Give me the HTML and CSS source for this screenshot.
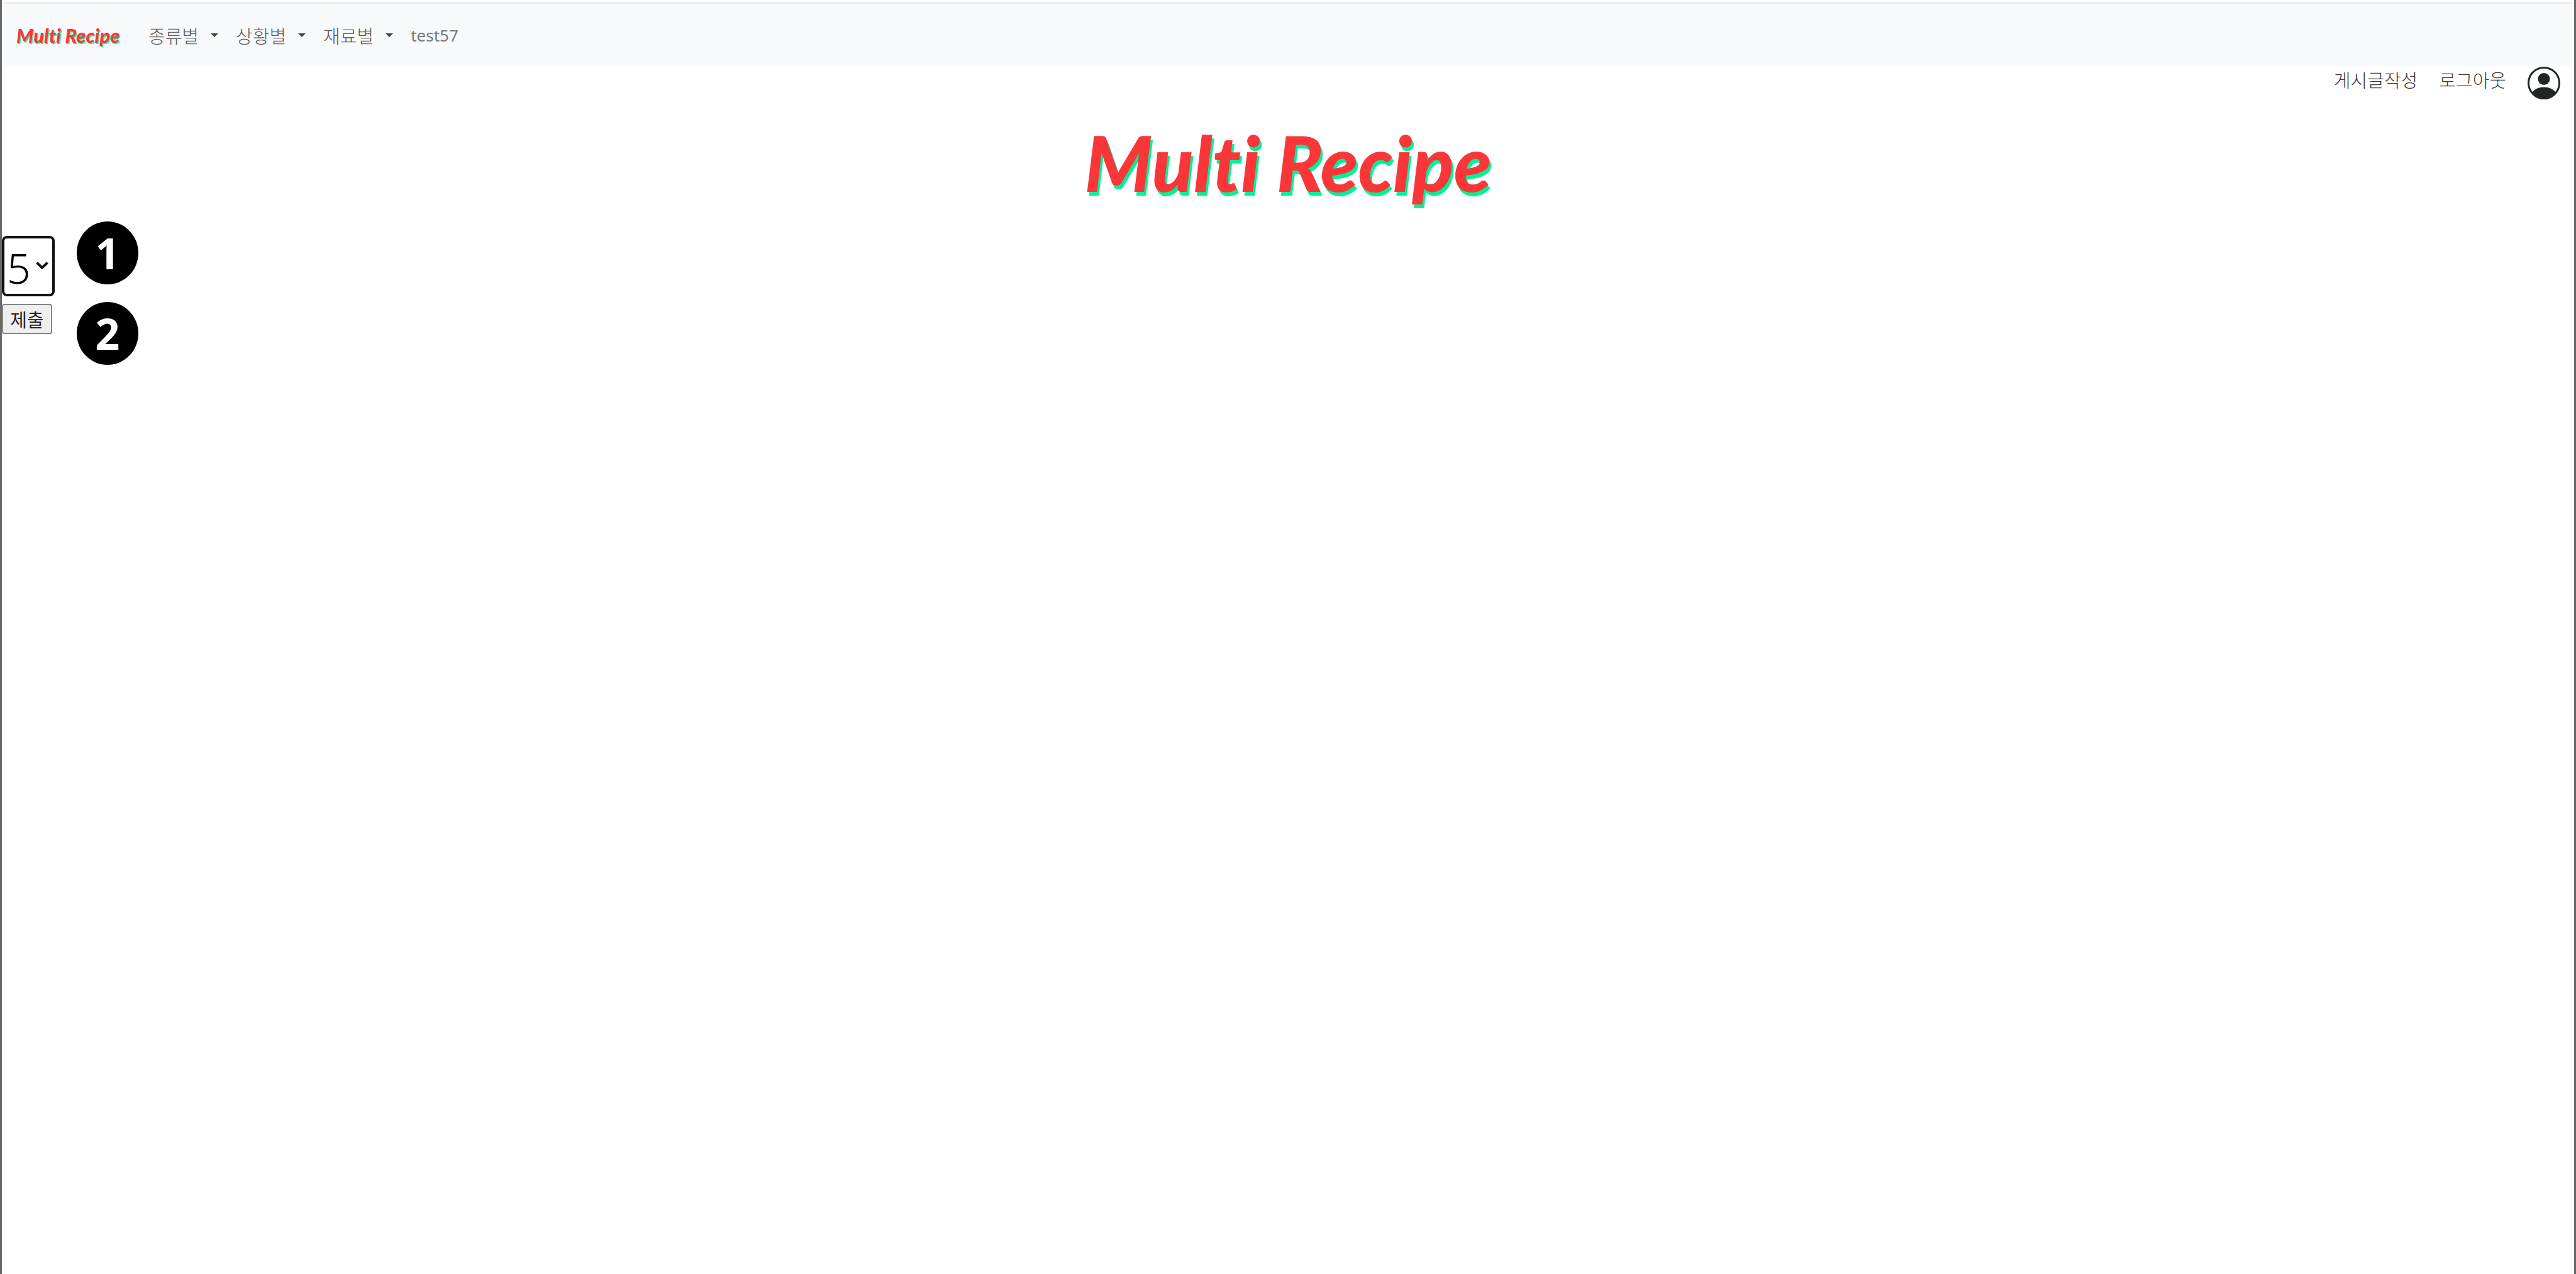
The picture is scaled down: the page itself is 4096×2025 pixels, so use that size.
FILE: index.html
```html
<!DOCTYPE html>
<html lang="ko">
<head>
<meta charset="utf-8">
<title>Multi Recipe</title>
<link rel="stylesheet" href="styles.css">
</head>
<body>
<nav class="navbar">
  <a class="wordmark wordmark-small" href="#">Multi Recipe</a>
  <ul class="menu">
    <li><a class="menu-link dropdown" href="#">종류별</a></li>
    <li><a class="menu-link dropdown" href="#">상황별</a></li>
    <li><a class="menu-link dropdown" href="#">재료별</a></li>
    <li><a class="menu-link latin" href="#">test57</a></li>
  </ul>
</nav>
<div class="user-bar">
  <a href="#">게시글작성</a>
  <a href="#">로그아웃</a>
  <a class="avatar" href="#" aria-label="프로필">
    <svg viewBox="0 0 52 52" width="52" height="52">
      <defs><clipPath id="disc"><circle cx="26" cy="26" r="25"/></clipPath></defs>
      <circle cx="26" cy="26" r="24.500" fill="#fff" stroke="#212529" stroke-width="3"/>
      <circle cx="26" cy="19.500" r="9.500" fill="#212529"/>
      <ellipse cx="26" cy="46" rx="20" ry="13.500" fill="#212529" clip-path="url(#disc)"/>
    </svg>
  </a>
</div>
<header class="masthead">
  <h1 class="wordmark">Multi Recipe</h1>
</header>
<main>
  <form class="rating">
    <div class="field">
      <select class="score" aria-label="점수">
        <option>1</option>
        <option>2</option>
        <option>3</option>
        <option>4</option>
        <option selected>5</option>
      </select>
      <svg class="chevron" viewBox="0 0 20 12" width="20" height="12"><path d="M1.500 1.500 L10 9.500 L18.500 1.500" fill="none" stroke="#111" stroke-width="4"/></svg>
      <span class="marker">1</span>
    </div>
    <div class="field">
      <button class="submit" type="button">제출</button>
      <span class="marker">2</span>
    </div>
  </form>
</main>
</body>
</html>
```
FILE: styles.css
```css
* {
  box-sizing: border-box;
}

body {
  margin: 0;
  min-height: 100vh;
  padding-top: 3px;
  border: solid #6a6a6a;
  border-width: 0 3px;
  background: #fff;
  color: #3c3c3c;
  font: 300 29px/40px "Noto Sans CJK KR", sans-serif;
}

a {
  color: inherit;
  text-decoration: none;
}

.navbar {
  display: flex;
  align-items: center;
  height: 103px;
  margin: 0 3px;
  padding: 0 20px;
  border-top: 3px solid #ededee;
  background: #f8f9fa;
}

.wordmark {
  margin: 0;
  color: #fa3638;
  font: italic 900 122px/140px Lato, sans-serif;
  font-variant-ligatures: none;
  text-shadow: 3px 6px 0 #00f296;
  white-space: nowrap;
}

.wordmark-small {
  width: 210px;
  font-size: 31px;
  line-height: 40px;
  text-shadow: 1px 2px 0 #00f296;
}

.menu {
  display: flex;
  gap: 28px;
  margin: 0;
  padding: 0;
  list-style: none;
}

.menu-link {
  display: flex;
  align-items: center;
  gap: 19px;
  color: #5c5d5e;
}

.dropdown::after {
  content: "";
  border: 6px solid transparent;
  border-top-color: #444;
  border-bottom: 0;
}

.latin {
  color: #77787a;
  font-family: "Noto Sans", sans-serif;
  font-size: 26px;
  font-weight: 400;
}

.user-bar {
  display: flex;
  justify-content: flex-end;
  gap: 34px;
  height: 52px;
  padding-right: 22px;
}

.avatar svg {
  display: block;
}

.masthead {
  display: flex;
  justify-content: center;
  height: 217px;
  padding-top: 30px;
}

.rating {
  display: flex;
  flex-direction: column;
  gap: 12px;
}

.field {
  position: relative;
  display: flex;
}

.score {
  appearance: none;
  width: 84px;
  height: 96px;
  padding: 4px 4px 0;
  border: 4px solid #101010;
  border-radius: 8px;
  background: #fff;
  color: #000;
  font: 300 66px/84px "Noto Sans", sans-serif;
}

.chevron {
  position: absolute;
  top: 41px;
  left: 54px;
  pointer-events: none;
}

.submit {
  width: 80px;
  height: 48px;
  padding: 0;
  border: 2px solid #858585;
  border-radius: 4px;
  background: #efefef;
  color: #222;
  font: 29px/40px "Noto Sans CJK KR", sans-serif;
}

.marker {
  position: absolute;
  top: 0;
  left: 119px;
  width: 98px;
  height: 100px;
  margin-top: -23px;
  border-radius: 50%;
  background: #000;
  color: #fff;
  font: 700 68px/100px "Noto Sans", sans-serif;
  text-align: center;
}

.submit + .marker {
  margin-top: -3px;
}
```
